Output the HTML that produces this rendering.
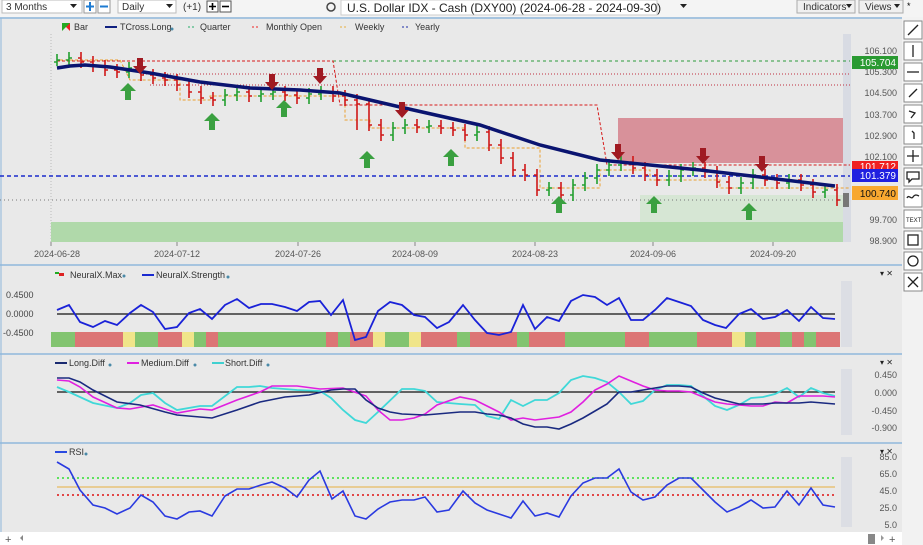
<!DOCTYPE html>
<html><head><meta charset="utf-8"><style>
body{margin:0;width:923px;height:545px;overflow:hidden;background:#f2f2f2;font-family:"Liberation Sans",sans-serif;}
svg{position:absolute;left:0;top:0}
text{font-family:"Liberation Sans",sans-serif}
</style></head><body>
<svg width="923" height="545" viewBox="0 0 923 545">
<rect x="0" y="0" width="923" height="17" fill="#f4f4f4"/>
<rect x="2" y="0" width="80" height="13" fill="#fff" stroke="#bbb"/><text x="6" y="10" font-size="10" fill="#333">3 Months</text><path d="M70 4h7l-3.5 4z" fill="#222"/>
<rect x="84" y="0" width="12" height="13" fill="#fff" stroke="#999"/><path d="M90 2v9M86 6.5h8" stroke="#1e7bd2" stroke-width="2"/>
<rect x="98" y="0" width="12" height="13" fill="#fff" stroke="#999"/><path d="M100 6.5h8" stroke="#1e7bd2" stroke-width="2"/>
<rect x="118" y="0" width="58" height="13" fill="#fff" stroke="#bbb"/><text x="122" y="10" font-size="10" fill="#333">Daily</text><path d="M166 4h7l-3.5 4z" fill="#222"/>
<text x="183" y="10" font-size="10" fill="#333">(+1)</text>
<rect x="207" y="1" width="11" height="11" fill="#fff" stroke="#555"/><path d="M212.5 3v7M209 6.5h7" stroke="#000" stroke-width="1.6"/>
<rect x="220" y="1" width="11" height="11" fill="#fff" stroke="#555"/><path d="M222 6.5h7" stroke="#000" stroke-width="1.6"/>
<circle cx="331" cy="7" r="4" fill="none" stroke="#444" stroke-width="1.5"/>
<rect x="341" y="0" width="316" height="15" fill="#fff" stroke="#ccc"/><text x="347" y="12" font-size="12" fill="#222">U.S. Dollar IDX - Cash (DXY00) (2024-06-28 - 2024-09-30)</text>
<path d="M680 4h7l-3.5 4z" fill="#222"/>
<rect x="797" y="0" width="58" height="13" fill="#f0f0f0" stroke="#aaa"/><text x="803" y="10" font-size="10" fill="#333">Indicators</text><path d="M846 4h6l-3 4z" fill="#222"/>
<rect x="859" y="0" width="44" height="13" fill="#f0f0f0" stroke="#aaa"/><text x="865" y="10" font-size="10" fill="#333">Views</text><path d="M894 4h6l-3 4z" fill="#222"/>
<text x="907" y="9" font-size="9">*</text>
<rect x="0" y="17" width="902" height="515" fill="#e9e9e9"/>
<line x1="0" y1="18" x2="902" y2="18" stroke="#8fb8dc" stroke-width="1.5"/>
<line x1="1" y1="18" x2="1" y2="532" stroke="#8fb8dc"/>
<line x1="51" y1="34" x2="51" y2="245" stroke="#bbb" stroke-dasharray="1,2"/>
<path d="M62 23h8v8z" fill="#e22"/><path d="M62 23h8l-8 8z" fill="#2a2"/>
<text x="74" y="30" font-size="9" fill="#333">Bar</text>
<rect x="105" y="26" width="12" height="2" fill="#102080"/><text x="120" y="30" font-size="9" fill="#333">TCross.Long</text><circle cx="172" cy="29" r="1.5" fill="#4a8aa8"/>
<path d="M188 27h2M192 27h2" stroke="#2a6" /><text x="200" y="30" font-size="9" fill="#333">Quarter</text>
<path d="M252 27h2M256 27h2" stroke="#e22"/><text x="266" y="30" font-size="9" fill="#333">Monthly Open</text>
<path d="M340 27h2M344 27h2" stroke="#e8b040"/><text x="355" y="30" font-size="9" fill="#333">Weekly</text>
<path d="M402 27h2M406 27h2" stroke="#1a2aa8"/><text x="415" y="30" font-size="9" fill="#333">Yearly</text>
<rect x="51" y="222" width="799" height="20" fill="#b0d9aa"/>
<rect x="640" y="195" width="210" height="27" fill="#d6e6d4"/>
<rect x="618" y="118" width="232" height="45" fill="#d8919a"/>
<rect x="843" y="34" width="8" height="208" fill="#d8dbe3"/>
<line x1="333" y1="61" x2="850" y2="61" stroke="#2a9a3a" stroke-dasharray="3,3"/>
<line x1="140" y1="74" x2="850" y2="74" stroke="#c03040" stroke-dasharray="1,2"/>
<line x1="150" y1="85" x2="850" y2="85" stroke="#c03040" stroke-dasharray="1,2"/>
<path d="M57 61H333L340 105H597L607 165H850" fill="none" stroke="#d61a1a" stroke-dasharray="3,2"/>
<path d="M60 60H120L130 80H180V100H210V96H345V120H370V128H465V148H540V188H600V170H650V180H720V188H850" fill="none" stroke="#eaa030" stroke-dasharray="3,2"/>
<line x1="57" y1="176" x2="850" y2="176" stroke="#1a2acc" stroke-dasharray="4,3" stroke-width="1.5"/>
<line x1="0" y1="176" x2="57" y2="176" stroke="#1a2acc" stroke-dasharray="4,3" stroke-width="1.5"/>
<line x1="0" y1="200" x2="850" y2="200" stroke="#777" stroke-dasharray="1,3"/>
<g fill="none" stroke-width="1.6">
<path stroke="#22a030" d="M57 54V66M54 62H57M57 60H60 M69 52V66M66 60H69M69 58H72 M129 62V78M126 72H129M129 68H132 M225 89V106M222 100H225M225 95H228 M237 86V101M234 95H237M237 92H240 M261 88V102M258 96H261M261 94H264 M273 86V100M270 94H273M273 92H276 M309 88V104M306 98H309M309 94H312 M321 86V100M318 94H321M321 92H324 M393 122V141M390 135H393M393 128H396 M405 119V134M402 128H405M405 125H408 M429 120V133M426 127H429M429 126H432 M477 126V141M474 135H477M477 132H480 M549 182V196M546 190H549M549 188H552 M573 179V201M570 195H573M573 185H576 M585 172V191M582 185H585M585 178H588 M597 164V184M594 178H597M597 170H600 M609 159V176M606 170H609M609 165H612 M621 156V171M618 165H621M621 162H624 M669 170V186M666 180H669M669 176H672 M681 164V182M678 176H681M681 170H684 M693 162V176M690 170H693M693 168H696 M741 177V194M738 188H741M741 183H744 M753 169V189M750 183H753M753 175H756 M789 174V189M786 183H789M789 180H792 M825 184V198M822 192H825M825 190H828"/>
<path stroke="#d01818" d="M81 52V68M78 58H81M81 62H84 M93 56V72M90 62H93M93 66H96 M105 60V76M102 66H105M105 70H108 M117 64V78M114 70H117M117 72H120 M141 62V81M138 68H141M141 75H144 M153 69V84M150 75H153M153 78H156 M165 72V86M162 78H165M165 80H168 M177 74V91M174 80H177M177 85H180 M189 79V98M186 85H189M189 92H192 M201 86V104M198 92H201M201 98H204 M213 92V106M210 98H213M213 100H216 M249 86V102M246 92H249M249 96H252 M285 86V101M282 92H285M285 95H288 M297 89V104M294 95H297M297 98H300 M333 86V102M330 92H333M333 96H336 M345 90V106M342 96H345M345 100H348 M357 94V130M354 100H357M357 104H360 M369 98V131M366 104H369M369 125H372 M381 119V141M378 125H381M381 135H384 M417 119V133M414 125H417M417 127H420 M441 120V134M438 126H441M441 128H444 M453 122V136M450 128H453M453 130H456 M465 124V141M462 130H465M465 135H468 M489 126V151M486 132H489M489 145H492 M501 139V164M498 145H501M501 158H504 M513 152V176M510 158H513M513 170H516 M525 164V181M522 170H525M525 175H528 M537 169V196M534 175H537M537 190H540 M561 182V201M558 188H561M561 195H564 M633 156V174M630 162H633M633 168H636 M645 162V181M642 168H645M645 175H648 M657 169V186M654 175H657M657 180H660 M705 162V178M702 168H705M705 172H708 M717 166V188M714 172H717M717 182H720 M729 176V194M726 182H729M729 188H732 M765 169V186M762 175H765M765 180H768 M777 174V189M774 180H777M777 183H780 M801 174V191M798 180H801M801 185H804 M813 179V198M810 185H813M813 192H816 M837 184V206M834 190H837M837 200H840"/>
</g>
<rect x="843" y="193" width="6" height="14" fill="#777"/>
<polyline points="57,68 70,66 85,65 110,67 150,73 200,82 250,88 300,90 340,93 370,100 400,107 480,125 540,145 600,160 700,170 760,177 835,186" fill="none" stroke="#0a1470" stroke-width="3.5"/>
<g fill="#a01a22">
<path d="M137 58h6v8h4l-7 8-7-8h4z"/><path d="M269 74h6v8h4l-7 8-7-8h4z"/><path d="M317 68h6v8h4l-7 8-7-8h4z"/><path d="M399 102h6v8h4l-7 8-7-8h4z"/><path d="M615 144h6v8h4l-7 8-7-8h4z"/><path d="M700 148h6v8h4l-7 8-7-8h4z"/><path d="M759 156h6v8h4l-7 8-7-8h4z"/>
</g>
<g fill="#3aa040">
<path d="M128 83l8 8h-5v9h-6v-9h-5z"/><path d="M212 113l8 8h-5v9h-6v-9h-5z"/><path d="M284 100l8 8h-5v9h-6v-9h-5z"/><path d="M367 151l8 8h-5v9h-6v-9h-5z"/><path d="M451 149l8 8h-5v9h-6v-9h-5z"/><path d="M559 196l8 8h-5v9h-6v-9h-5z"/><path d="M654 196l8 8h-5v9h-6v-9h-5z"/><path d="M749 203l8 8h-5v9h-6v-9h-5z"/>
</g>
<g font-size="9" fill="#555" text-anchor="end">
<text x="897" y="54">106.100</text><text x="897" y="75">105.300</text><text x="897" y="96">104.500</text><text x="897" y="118">103.700</text><text x="897" y="139">102.900</text><text x="897" y="160">102.100</text><text x="897" y="223">99.700</text><text x="897" y="244">98.900</text>
</g>
<rect x="852" y="56" width="46" height="13" fill="#2a9a32"/><text x="896" y="66" font-size="10" fill="#fff" text-anchor="end">105.704</text>
<rect x="852" y="161" width="46" height="10" fill="#f02020"/><text x="896" y="170" font-size="10" fill="#fff" text-anchor="end">101.712</text>
<rect x="852" y="169" width="46" height="13" fill="#2020e0"/><text x="896" y="179" font-size="10" fill="#fff" text-anchor="end">101.379</text>
<rect x="852" y="186" width="46" height="14" fill="#f8a830"/><text x="896" y="197" font-size="10" fill="#111" text-anchor="end">100.740</text>
<path d="M51 242V246M177 242V246M298 242V246M415 242V246M535 242V246M653 242V246M773 242V246" stroke="#888"/>
<g font-size="9" fill="#555" text-anchor="middle">
<text x="57" y="257">2024-06-28</text><text x="177" y="257">2024-07-12</text><text x="298" y="257">2024-07-26</text><text x="415" y="257">2024-08-09</text><text x="535" y="257">2024-08-23</text><text x="653" y="257">2024-09-06</text><text x="773" y="257">2024-09-20</text>
</g>
<line x1="0" y1="265" x2="902" y2="265" stroke="#8fb8dc" stroke-width="1.5"/>
<line x1="0" y1="354" x2="902" y2="354" stroke="#8fb8dc" stroke-width="1.5"/>
<line x1="0" y1="443" x2="902" y2="443" stroke="#8fb8dc" stroke-width="1.5"/>
<g font-size="8" fill="#222"><text x="880" y="276">▾ ✕</text><text x="880" y="365">▾ ✕</text><text x="880" y="454">▾ ✕</text></g>
<path d="M55 272h4v2h-4z" fill="#2a2"/><path d="M59 273h5v3h-5z" fill="#d22"/>
<text x="70" y="278" font-size="9" fill="#333">NeuralX.Max</text><circle cx="124" cy="276" r="1.5" fill="#4a8aa8"/>
<rect x="142" y="274" width="12" height="2" fill="#1a2ad0"/><text x="156" y="278" font-size="9" fill="#333">NeuralX.Strength</text><circle cx="228" cy="277" r="1.5" fill="#4a8aa8"/>
<g font-size="9" fill="#444"><text x="6" y="298">0.4500</text><text x="6" y="317">0.0000</text><text x="3" y="336">-0.4500</text></g>
<g>
<rect x="51" y="332" width="24" height="15" fill="#82c470"/><rect x="75" y="332" width="48" height="15" fill="#dc7575"/><rect x="123" y="332" width="12" height="15" fill="#f0e58a"/><rect x="135" y="332" width="23" height="15" fill="#82c470"/><rect x="158" y="332" width="24" height="15" fill="#dc7575"/><rect x="182" y="332" width="12" height="15" fill="#f0e58a"/><rect x="194" y="332" width="12" height="15" fill="#82c470"/><rect x="206" y="332" width="12" height="15" fill="#dc7575"/><rect x="218" y="332" width="108" height="15" fill="#82c470"/><rect x="326" y="332" width="12" height="15" fill="#dc7575"/><rect x="338" y="332" width="12" height="15" fill="#82c470"/><rect x="350" y="332" width="23" height="15" fill="#dc7575"/><rect x="373" y="332" width="12" height="15" fill="#f0e58a"/><rect x="385" y="332" width="24" height="15" fill="#82c470"/><rect x="409" y="332" width="12" height="15" fill="#f0e58a"/><rect x="421" y="332" width="36" height="15" fill="#dc7575"/><rect x="457" y="332" width="13" height="15" fill="#82c470"/><rect x="470" y="332" width="47" height="15" fill="#dc7575"/><rect x="517" y="332" width="12" height="15" fill="#82c470"/><rect x="529" y="332" width="36" height="15" fill="#dc7575"/><rect x="565" y="332" width="60" height="15" fill="#82c470"/><rect x="625" y="332" width="24" height="15" fill="#dc7575"/><rect x="649" y="332" width="48" height="15" fill="#82c470"/><rect x="697" y="332" width="35" height="15" fill="#dc7575"/><rect x="732" y="332" width="13" height="15" fill="#f0e58a"/><rect x="745" y="332" width="11" height="15" fill="#82c470"/><rect x="756" y="332" width="24" height="15" fill="#dc7575"/><rect x="780" y="332" width="12" height="15" fill="#82c470"/><rect x="792" y="332" width="12" height="15" fill="#dc7575"/><rect x="804" y="332" width="12" height="15" fill="#82c470"/><rect x="816" y="332" width="24" height="15" fill="#dc7575"/>
</g>
<rect x="841" y="281" width="11" height="66" fill="#dcdee4"/>
<line x1="57" y1="314" x2="835" y2="314" stroke="#111" stroke-width="1.3"/>
<polyline fill="none" stroke="#1a22d8" stroke-width="1.8" points="57,310 69,305 80,322 93,327 105,321 117,325 130,313 141,305 153,312 165,329 177,327 189,313 200,309 212,319 225,305 237,299 249,308 261,304 272,304 285,307 297,311 309,302 320,301 331,315 343,300 355,340 366,337 378,311 390,302 402,305 414,315 425,317 437,328 449,322 463,305 475,320 487,333 499,335 511,332 523,305 535,329 547,317 559,321 571,301 583,295 595,297 607,305 619,298 631,320 643,320 655,310 667,298 679,302 691,306 703,320 715,325 726,328 739,314 751,309 763,319 775,317 787,310 799,321 811,307 823,318 835,319"/>
<rect x="55" y="362" width="12" height="2" fill="#1a2a70"/><text x="69" y="366" font-size="9" fill="#333">Long.Diff</text><circle cx="110" cy="365" r="1.5" fill="#4a8aa8"/>
<rect x="127" y="362" width="12" height="2" fill="#e020e0"/><text x="141" y="366" font-size="9" fill="#333">Medium.Diff</text><circle cx="195" cy="365" r="1.5" fill="#4a8aa8"/>
<rect x="212" y="362" width="12" height="2" fill="#40d0d0"/><text x="225" y="366" font-size="9" fill="#333">Short.Diff</text><circle cx="268" cy="365" r="1.5" fill="#4a8aa8"/>
<rect x="841" y="369" width="11" height="66" fill="#dcdee4"/>
<g font-size="9" fill="#555" text-anchor="end"><text x="897" y="378">0.450</text><text x="897" y="396">0.000</text><text x="897" y="414">-0.450</text><text x="897" y="431">-0.900</text></g>
<line x1="57" y1="392" x2="835" y2="392" stroke="#111" stroke-width="1.3"/>
<polyline fill="none" stroke="#40d8d8" stroke-width="1.8" points="57,387 69,392 93,403 117,408 130,403 141,395 153,393 165,403 177,410 200,406 212,406 237,387 249,387 260,386 272,388 297,390 320,391 331,398 343,410 355,420 366,423 378,412 402,389 414,389 425,391 437,402 460,404 475,405 487,416 499,419 511,400 523,406 535,400 547,400 559,393 571,380 583,376 595,378 607,382 619,392 631,404 643,401 655,390 667,385 679,385 691,386 703,396 715,406 727,410 739,405 751,398 763,397 775,394 787,388 799,397 811,388 823,393 835,396"/>
<polyline fill="none" stroke="#e020e0" stroke-width="1.6" points="57,380 69,381 80,387 93,397 117,408 130,409 153,405 165,409 177,413 200,409 212,410 237,400 260,392 272,386 297,386 320,389 343,388 366,396 378,410 390,420 402,420 414,418 425,414 437,405 460,397 475,400 499,412 511,420 523,418 535,420 559,417 571,412 583,402 595,390 607,384 619,376 631,381 643,386 655,390 667,391 679,391 691,392 703,397 715,402 727,404 751,406 763,406 775,402 787,403 799,396 811,396 823,396 835,397"/>
<polyline fill="none" stroke="#1a2a80" stroke-width="1.6" points="57,378 69,378 80,382 93,390 117,402 140,405 165,412 177,415 200,417 212,418 237,410 260,402 285,397 309,395 331,390 343,389 355,389 366,400 378,408 390,412 402,414 425,415 437,414 460,412 475,412 487,414 499,415 511,418 523,424 535,427 547,427 559,429 571,424 583,418 595,411 607,404 619,392 631,392 643,390 655,388 667,386 679,386 691,387 703,393 715,398 727,401 739,404 763,404 775,403 799,403 811,402 823,403 835,404"/>
<rect x="55" y="451" width="12" height="2" fill="#2a4ae0"/><text x="69" y="455" font-size="9" fill="#333">RSI</text><circle cx="86" cy="454" r="1.5" fill="#4a8aa8"/>
<rect x="841" y="457" width="11" height="70" fill="#dcdee4"/>
<g font-size="9" fill="#555" text-anchor="end"><text x="897" y="460">85.0</text><text x="897" y="477">65.0</text><text x="897" y="494">45.0</text><text x="897" y="511">25.0</text><text x="897" y="528">5.0</text></g>
<line x1="57" y1="478" x2="835" y2="478" stroke="#30e030" stroke-dasharray="2,3" stroke-width="1.5"/>
<line x1="57" y1="487" x2="835" y2="487" stroke="#e8b040"/>
<line x1="57" y1="495" x2="835" y2="495" stroke="#e01010" stroke-dasharray="2,3" stroke-width="1.5"/>
<polyline fill="none" stroke="#2a3ae0" stroke-width="1.6" points="57,462 69,469 80,490 93,505 105,508 117,514 130,508 141,495 153,502 165,516 177,519 189,512 200,511 212,516 225,496 237,489 249,489 261,485 272,482 285,488 297,497 309,480 320,471 332,499 343,491 355,516 366,519 378,509 390,502 402,500 414,500 425,497 437,512 449,510 463,491 475,503 487,510 499,514 511,518 523,501 535,516 547,513 559,517 571,496 583,483 595,478 607,478 619,469 631,492 643,500 655,497 667,485 679,478 691,478 703,490 715,502 727,512 739,507 751,500 763,508 775,507 787,491 799,505 811,488 823,505 835,507"/>
<rect x="0" y="532" width="902" height="13" fill="#fff"/>
<text x="5" y="543" font-size="11" fill="#555">+</text><path d="M23 535v6l-3-3z" fill="#888"/>
<rect x="868" y="534" width="7" height="10" fill="#888"/><path d="M881 535v6l3-3z" fill="#999"/><text x="889" y="543" font-size="11" fill="#555">+</text>
<rect x="902" y="17" width="21" height="528" fill="#f2f2f2"/>
<g fill="#fff" stroke="#888">
<rect x="904" y="21" width="18" height="18"/><rect x="904" y="42" width="18" height="18"/><rect x="904" y="63" width="18" height="18"/><rect x="904" y="84" width="18" height="18"/><rect x="904" y="105" width="18" height="18"/><rect x="904" y="126" width="18" height="18"/><rect x="904" y="147" width="18" height="18"/><rect x="904" y="168" width="18" height="18"/><rect x="904" y="189" width="18" height="18"/><rect x="904" y="210" width="18" height="18"/><rect x="904" y="231" width="18" height="18"/><rect x="904" y="252" width="18" height="18"/><rect x="904" y="273" width="18" height="18"/>
</g>
<g stroke="#222" fill="none" stroke-width="1.3">
<path d="M908 35l10-10"/><path d="M913 45v12"/><path d="M907 72h12"/><path d="M909 97l8-8"/><path d="M909 111l6 2-4 5"/><path d="M912 131l2 2v6"/><path d="M913 150v12M907 156h12"/><path d="M907 172h12v7h-7l-3 3v-3h-2z"/><path d="M907 198c2-4 4 2 6-1s4-2 6-1"/><rect x="908" y="235" width="10" height="10"/><circle cx="913" cy="261" r="5"/><path d="M908 277l10 10M918 277l-10 10"/>
</g>
<text x="906" y="222" font-size="6" fill="#222">TEXT</text>
</svg>
</body></html>
